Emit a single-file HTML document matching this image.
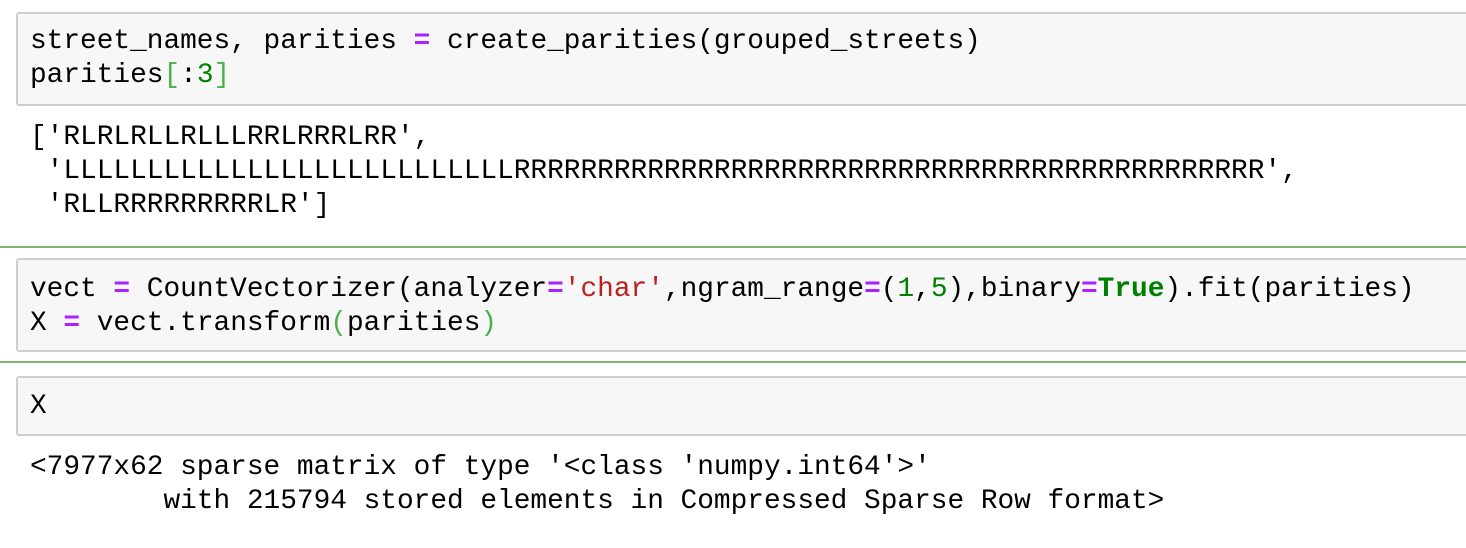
<!DOCTYPE html>
<html><head><meta charset="utf-8"><style>
body{margin:0;width:1466px;height:548px;background:#fff;position:relative;overflow:hidden;font-family:"Liberation Mono",monospace;font-size:27.8px;color:#000}
.box{position:absolute;left:16px;width:1470px;background:#f7f7f7;border:2px solid #cfcfcf;border-radius:3px;box-sizing:border-box}
.t{position:absolute;left:30px;white-space:pre;line-height:34px}
.g{position:absolute;left:0;width:1466px;height:2px;background:#7db872}
.o{color:#aa22ff;font-weight:bold}
.n{color:#008000}
.b{color:#4cb04c}
.s{color:#ba2121}
.k{color:#008000;font-weight:bold}
</style></head><body>
<div class="box" style="top:12px;height:94px"></div>
<div class="t" style="top:25px">street_names, parities <span class="o">=</span> create_parities(grouped_streets)
parities<span class="b">[</span>:<span class="n">3</span><span class="b">]</span></div>
<div class="t" style="top:121px">['RLRLRLLRLLLRRLRRRLRR',
 'LLLLLLLLLLLLLLLLLLLLLLLLLLLRRRRRRRRRRRRRRRRRRRRRRRRRRRRRRRRRRRRRRRRRRRRR',
 'RLLRRRRRRRRRLR']</div>
<div class="g" style="top:246px"></div>
<div class="box" style="top:258px;height:94px"></div>
<div class="t" style="top:273px">vect <span class="o">=</span> CountVectorizer(analyzer<span class="o">=</span><span class="s">'char'</span>,ngram_range<span class="o">=</span>(<span class="n">1</span>,<span class="n">5</span>),binary<span class="o">=</span><span class="k">True</span>).fit(parities)
X <span class="o">=</span> vect.transform<span class="b">(</span>parities<span class="b">)</span></div>
<div class="g" style="top:361px"></div>
<div class="box" style="top:376px;height:60px"></div>
<div class="t" style="top:390px">X</div>
<div class="t" style="top:451px">&lt;7977x62 sparse matrix of type '&lt;class 'numpy.int64'&gt;'
	with 215794 stored elements in Compressed Sparse Row format&gt;</div>
</body></html>
